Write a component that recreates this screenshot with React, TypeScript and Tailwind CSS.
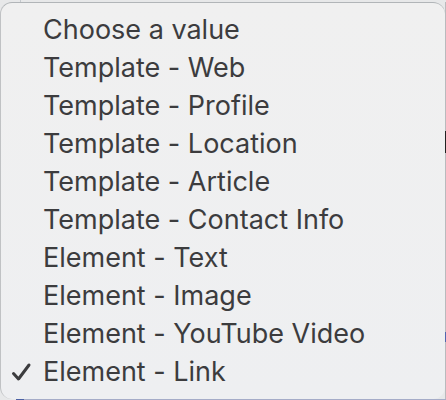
const options = [
  "Choose a value",
  "Template - Web",
  "Template - Profile",
  "Template - Location",
  "Template - Article",
  "Template - Contact Info",
  "Element - Text",
  "Element - Image",
  "Element - YouTube Video",
  "Element - Link",
];

export default function App() {
  return (
    <main className="flex min-h-screen flex-col bg-[#e7e8e9] font-['Inter',sans-serif]">
      {/* Page edges visible around the open menu */}
      <div aria-hidden="true" className="flex h-0.5 pl-5">
        <span className="w-px bg-[#c5c9cd]" />
      </div>
      <div className="flex">
        <ul role="listbox" aria-label="Value" className="min-w-0 flex-1 rounded-xl border-t border-l border-t-[#b1b5b8] border-l-[#c0c2c4] bg-linear-to-b from-[#f0f0f0] to-[#eeeff1] py-2">
          {options.map((option) => {
            const selected = option === "Element - Link";
            return (
              <li key={option} role="option" aria-selected={selected}>
                <button type="button" className="flex h-[38px] w-full items-center pl-2 text-left text-[27px] leading-[38px] text-[#3c3c3e] [font-feature-settings:'calt'_0]">
                  <span className="flex w-[34px] shrink-0">
                    {selected && (
                      <svg aria-hidden="true" viewBox="0 0 24 24" className="size-6" fill="none" stroke="currentColor" strokeWidth="3" strokeLinecap="round" strokeLinejoin="round">
                        <path d="M4.5 13.5L9.5 19L20 5" />
                      </svg>
                    )}
                  </span>
                  {option}
                </button>
              </li>
            );
          })}
        </ul>
        <div aria-hidden="true" className="flex w-px flex-col bg-[#b9babd] pt-[129px]">
          <span className="h-[22px] bg-[#222222]" />
          <span className="mt-[179px] h-[10px] bg-[#5266ad]" />
        </div>
      </div>
      <div aria-hidden="true" className="flex min-h-px flex-1 pl-4">
        <span className="w-2 bg-[#4c62a4]" />
        <span className="flex-1 bg-[#a5acc8]" />
      </div>
    </main>
  );
}
